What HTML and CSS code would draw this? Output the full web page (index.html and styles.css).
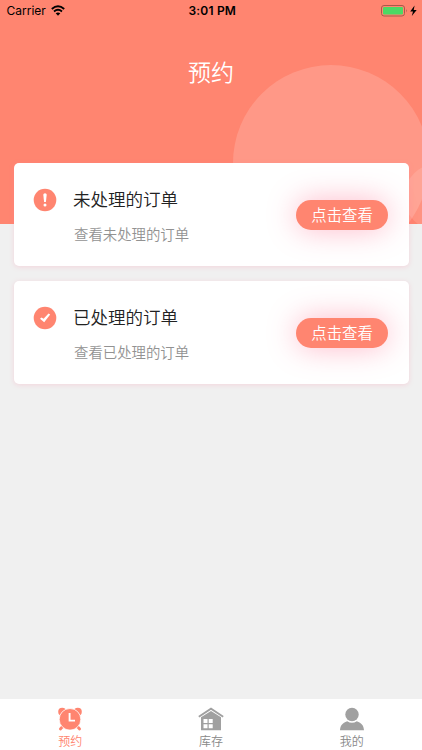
FILE: index.html
```html
<!DOCTYPE html>
<html lang="zh-CN">
<head>
  <meta charset="UTF-8">
  <title>预约</title>
  <link rel="stylesheet" href="styles.css">
</head>
<body>
  <header class="header">
    <div class="circle big"></div>
    <div class="circle small"></div>
    <div class="status-bar">
      <div class="carrier">
        <span>Carrier</span>
        <svg width="14" height="11" viewBox="0 0 14 11">
          <path d="M0.8 4Q7-1.4 13.2 4M3 6.5Q7 3.2 11 6.5" fill="none" stroke="#000" stroke-width="1.9"/>
          <path d="M4.7 8.3Q7 6.6 9.3 8.3L7 10.7z"/>
        </svg>
      </div>
      <div class="time">3:01 PM</div>
      <div class="battery">
        <svg width="36" height="12" viewBox="0 0 36 12">
          <rect x="0.5" y="0.5" width="23" height="10.5" rx="2.5" fill="none" stroke="#a85a4b"/>
          <rect x="2" y="2" width="20" height="7.5" rx="1.2" fill="#4cd964"/>
          <path d="M25 4Q26.5 5.8 25 7.6z" fill="#a85a4b"/>
          <path d="M33.6 0.6L29.2 6.4H32L30.8 11L35.7 4.9H32.7z"/>
        </svg>
      </div>
    </div>
    <h1 class="title">预约</h1>
  </header>

  <main class="content">
    <section class="card">
      <svg class="card-icon" width="24" height="24" viewBox="0 0 24 24">
        <circle cx="12" cy="12" r="11.3" fill="#ff8570"/>
        <path d="M10.3 6.8Q10.3 5.3 12 5.3T13.7 6.8L12.9 14H11.1z" fill="#fff"/>
        <circle cx="12" cy="16.9" r="1.5" fill="#fff"/>
      </svg>
      <div class="card-text">
        <h2>未处理的订单</h2>
        <p>查看未处理的订单</p>
      </div>
      <button class="view-btn" type="button">点击查看</button>
    </section>

    <section class="card">
      <svg class="card-icon" width="24" height="24" viewBox="0 0 24 24">
        <circle cx="12" cy="12" r="11.3" fill="#ff8570"/>
        <path d="M7 12.8L8.5 11.4L10.6 12.8L15.5 7.4L17.2 8.4L11.2 16.3z" fill="#fff"/>
      </svg>
      <div class="card-text">
        <h2>已处理的订单</h2>
        <p>查看已处理的订单</p>
      </div>
      <button class="view-btn" type="button">点击查看</button>
    </section>
  </main>

  <nav class="tab-bar">
    <a class="tab active">
      <svg width="26" height="24" viewBox="0 0 26 24">
        <circle cx="5.2" cy="4.8" r="4"/>
        <circle cx="20.8" cy="4.8" r="4"/>
        <path d="M7 18L3.4 22M19 18L22.6 22" stroke="currentColor" stroke-width="2.8" stroke-linecap="round"/>
        <circle cx="13" cy="12.3" r="10.8" stroke="#fff" stroke-width="0.8"/>
        <path d="M12.6 6V13.6H18" fill="none" stroke="#fff" stroke-width="1.9"/>
      </svg>
      <span>预约</span>
    </a>
    <a class="tab">
      <svg width="26" height="24" viewBox="0 0 26 24">
        <path d="M0.8 9.8L13 1.7L25.2 9.8" fill="none" stroke="currentColor" stroke-width="1.8"/>
        <path d="M3 10.3L13 3.9L23 10.3V23.3H3z"/>
        <path d="M5.5 12H9.5V16H5.5zM10.7 12H14.7V16H10.7zM5.5 17.2H9.5V21.2H5.5zM10.7 17.2H14.7V21.2H10.7z" fill="#fff"/>
      </svg>
      <span>库存</span>
    </a>
    <a class="tab">
      <svg width="26" height="24" viewBox="0 0 26 24">
        <circle cx="13" cy="7.5" r="6.7"/>
        <path d="M1 23.3C1.2 18.5 3.3 16 8.2 14.2Q13 17.3 17.8 14.2C22.7 16 24.8 18.5 25 23.3z"/>
      </svg>
      <span>我的</span>
    </a>
  </nav>
</body>
</html>
```
FILE: styles.css
```css
* {
  box-sizing: border-box;
}
body {
  margin: 0;
  height: 750px;
  display: flex;
  flex-direction: column;
  overflow: hidden;
  background-color: #f0f0f0;
  font-family: "Noto Sans CJK SC", sans-serif;
  font-weight: 350;
}
.header {
  position: relative;
  flex: none;
  height: 224px;
  overflow: hidden;
  background-color: #ff8570;
}
.circle {
  position: absolute;
  border-radius: 50%;
  background-color: rgba(255, 255, 255, 0.16);
}
.big {
  left: 233px;
  top: 65px;
  width: 196px;
  height: 196px;
}
.small {
  left: 404px;
  top: 164px;
  width: 66px;
  height: 66px;
  background-color: rgba(255, 255, 255, 0.12);
}
.status-bar {
  position: relative;
  display: grid;
  grid-template-columns: 1fr auto 1fr;
  align-items: center;
  height: 21px;
  padding: 0 5px 0 6.5px;
  font-family: Inter, sans-serif;
  font-size: 12px;
  font-weight: 400;
  color: #000;
}
.carrier {
  display: flex;
  align-items: center;
  gap: 5px;
}
.time {
  padding-left: 1px;
  font-weight: 600;
  letter-spacing: 0.2px;
}
.battery {
  display: flex;
  justify-content: flex-end;
}
.title {
  position: relative;
  margin: 33px 0 0;
  text-align: center;
  font-size: 23px;
  line-height: 34px;
  font-weight: 350;
  color: #fff;
}
.content {
  position: relative;
  flex: 1;
  display: flex;
  flex-direction: column;
  gap: 15px;
  margin-top: -61px;
  padding: 0 13.5px;
}
.card {
  display: flex;
  align-items: flex-start;
  height: 103px;
  padding: 0 20.4px 0 19.5px;
  border-radius: 5px;
  background-color: #fff;
  box-shadow: 0 1px 5px rgba(255, 130, 160, 0.25);
}
.card-icon {
  margin-top: 25px;
}
.card-text {
  flex: 1;
  padding: 23px 0 0 16px;
}
.card h2 {
  margin: 0;
  font-size: 17.5px;
  line-height: 26px;
  font-weight: 350;
  color: #222;
}
.card p {
  margin: 11px 0 0 1px;
  font-size: 14.4px;
  line-height: 21px;
  color: #929292;
}
.view-btn {
  width: 92px;
  height: 30px;
  margin-top: 36.5px;
  padding: 0 0 2px;
  border: none;
  border-radius: 15px;
  background-color: #ff8570;
  box-shadow: 0 0 30px rgba(255, 80, 120, 0.4);
  font-family: inherit;
  font-size: 15.4px;
  font-weight: 350;
  line-height: 28px;
  color: #fff;
}
.tab-bar {
  flex: none;
  display: flex;
  height: 51px;
  background-color: #fff;
}
.tab {
  flex: 1;
  display: flex;
  flex-direction: column;
  align-items: center;
  padding-top: 8px;
  font-size: 12px;
  line-height: 19px;
  color: #888;
}
.tab svg {
  flex: none;
  fill: currentColor;
  color: #a0a0a0;
}
.tab.active,
.tab.active svg {
  color: #ff8570;
}
```
